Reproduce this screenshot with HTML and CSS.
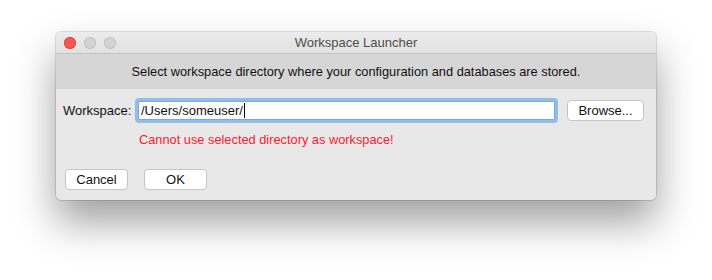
FILE: index.html
```html
<!DOCTYPE html>
<html>
<head>
<meta charset="utf-8">
<link rel="stylesheet" href="styles.css">
</head>
<body>
<div class="window">
  <div class="titlebar">
    <div class="lights">
      <span class="light red"></span>
      <span class="light"></span>
      <span class="light"></span>
    </div>
    <div class="title">Workspace Launcher</div>
  </div>
  <div class="header">Select workspace directory where your configuration and databases are stored.</div>
  <div class="content">
    <div class="row">
      <span class="label">Workspace:</span>
      <div class="input"><span class="value">/Users/someuser/</span><span class="caret"></span></div>
      <button class="btn browse">Browse...</button>
    </div>
    <div class="error">Cannot use selected directory as workspace!</div>
    <div class="actions">
      <button class="btn action">Cancel</button>
      <button class="btn action">OK</button>
    </div>
  </div>
</div>
</body>
</html>
```
FILE: styles.css
```css
html, body {
  margin: 0;
  padding: 0;
  background: #ffffff;
}
body {
  width: 712px;
  height: 280px;
  overflow: hidden;
  font-family: "Liberation Sans", Arial, sans-serif;
  font-size: 13px;
  color: #1a1a1a;
}
.window {
  margin: 32px 0 0 56px;
  width: 600px;
  height: 168px;
  border-radius: 5px;
  background: #e8e8e8;
  box-shadow: 0 22px 40px rgba(0,0,0,0.38), 0 0 0 1px rgba(0,0,0,0.12);
  overflow: hidden;
  display: flex;
  flex-direction: column;
}
.titlebar {
  height: 21px;
  border-bottom: 1px solid #c4c4c4;
  background: linear-gradient(#ececec, #e1e1e1);
  display: flex;
  align-items: center;
  position: relative;
}
.lights {
  display: flex;
  gap: 8px;
  padding-left: 8px;
}
.light {
  width: 12px;
  height: 12px;
  border-radius: 50%;
  background: #d3d3d3;
  box-shadow: inset 0 0 0 1px #c3c3c3;
}
.light.red {
  background: #fc5753;
  box-shadow: inset 0 0 0 1px #e0443e;
}
.title {
  position: absolute;
  left: 0;
  right: 0;
  text-align: center;
  color: #4d4d4d;
  font-size: 13px;
}
.header {
  height: 35px;
  background: #d6d6d6;
  display: flex;
  align-items: center;
  justify-content: center;
  font-size: 12.8px;
  color: #111;
}
.content {
  padding: 9px 0 0 7px;
  display: flex;
  flex-direction: column;
}
.row {
  display: flex;
  align-items: center;
  height: 25px;
}
.label {
  width: 72px;
  color: #111;
}
.input {
  width: 414px;
  height: 19px;
  border: 3px solid #91bdeb;
  border-radius: 4px;
  background: #fff;
  display: flex;
  align-items: center;
  padding-left: 3px;
  box-shadow: inset 0 0 0 1px #7ba8dc;
}
.value {
  color: #111;
}
.caret {
  width: 1px;
  height: 15px;
  background: #000;
  margin-left: 1px;
}
.btn {
  font-family: "Liberation Sans", Arial, sans-serif;
  font-size: 13px;
  color: #111;
  background: #fff;
  border: 1px solid #c4c4c4;
  border-radius: 4px;
  padding: 0;
  height: 21px;
}
.browse {
  width: 77px;
  margin-left: 9px;
}
.error {
  margin: 10px 0 0 76px;
  color: #ff1a2e;
  font-size: 12.8px;
  line-height: 14px;
}
.actions {
  display: flex;
  gap: 16px;
  margin: 22px 0 0 2px;
}
.action {
  width: 63px;
}
```
